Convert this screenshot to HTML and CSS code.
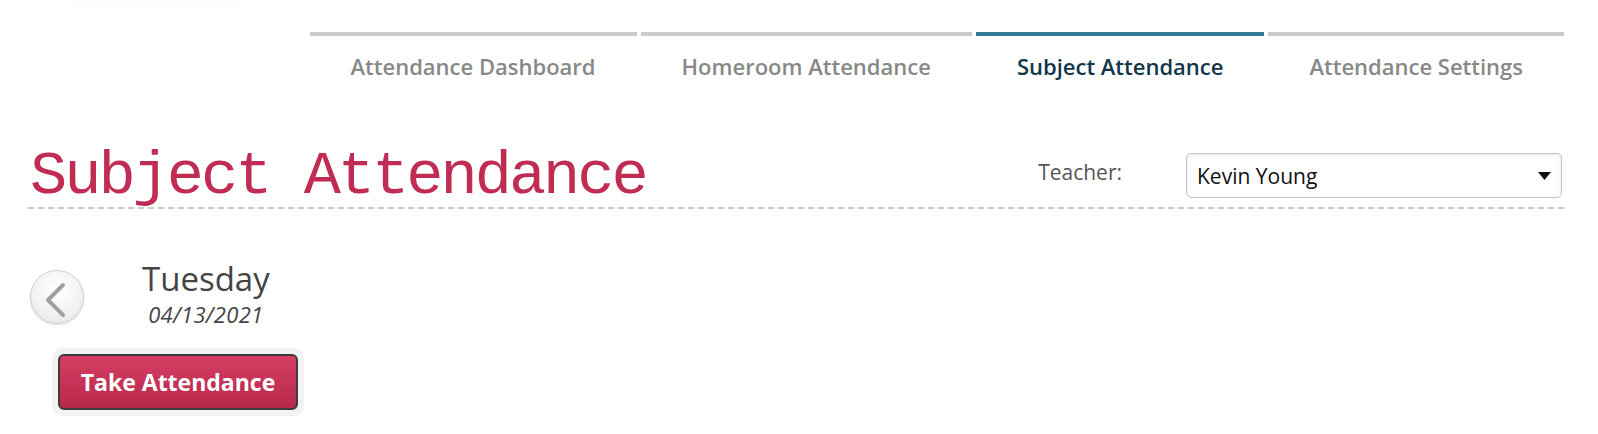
FILE: index.html
```html
<!DOCTYPE html>
<html lang="en">
<head>
  <meta charset="UTF-8">
  <meta name="viewport" content="width=device-width, initial-scale=1.0">
  <title>Subject Attendance</title>
  <link rel="stylesheet" href="styles.css">
</head>
<body>

<!-- Top navigation -->
<header class="topbar">
  <div class="logo-edge"></div>
  <nav class="tabs">
    <a class="tab" href="#">Attendance Dashboard</a>
    <a class="tab" href="#">Homeroom Attendance</a>
    <a class="tab active" href="#">Subject Attendance</a>
    <a class="tab" href="#">Attendance Settings</a>
  </nav>
</header>

<main class="page">
  <!-- Title + teacher select -->
  <div class="page-head">
    <h1 class="page-title">Subject Attendance</h1>
    <div class="teacher-picker">
      <span class="teacher-label">Teacher:</span>
      <div class="select">
        <span>Kevin Young</span>
        <svg class="select-arrow" viewBox="0 0 10 6"><path d="M0 0h10L5 6z"/></svg>
      </div>
    </div>
  </div>

  <!-- Day navigation -->
  <div class="day-nav">
    <button class="circle-btn" type="button" aria-label="Previous day">
      <svg viewBox="0 0 54 54"><polyline points="32,14 17,29 32,44"/></svg>
    </button>
    <div class="day-label">
      <div class="day-name">Tuesday</div>
      <div class="day-date">04/13/2021</div>
    </div>
  </div>

  <div class="take-wrap">
    <button class="take-btn" type="button">Take Attendance</button>
  </div>
</main>

</body>
</html>
```

FILE: styles.css
```css
body {
  margin: 0;
  font-family: "Open Sans", Arial, sans-serif;
  background: #fff;
  color: #444;
}

/* Top bar */
.topbar {
  display: flex;
  justify-content: space-between;
  align-items: flex-start;
  padding-right: 32px;
}

.logo-edge {
  width: 173px;
  height: 6px;
  margin-left: 70px;
  background: linear-gradient(#fefefe, #fbfbfb);
  border-radius: 0 0 6px 6px;
}

.tabs {
  display: flex;
  margin-top: 32px;
}

.tab {
  margin: 0 2px;
  padding: 16px 41px 0;
  border-top: 4px solid #cbcbcb;
  font-size: 22px;
  font-weight: 600;
  line-height: 28px;
  color: #888;
  text-decoration: none;
}

.tab.active {
  border-top-color: #34799a;
  color: #12374a;
}

/* Page */
.page {
  padding: 0 34px 0 28px;
}

.page-head {
  display: flex;
  justify-content: space-between;
  align-items: flex-end;
  margin-top: 72px;
  padding-bottom: 7px;
  background: repeating-linear-gradient(90deg, #cbcbcb 0 6px, transparent 6px 10px) left bottom / 100% 2px no-repeat;
}

.page-title {
  margin: 0 0 0 2px;
  font-family: "Liberation Mono", "Courier New", monospace;
  font-size: 62px;
  font-weight: normal;
  line-height: 50px;
  letter-spacing: -3px;
  color: #c02c53;
}

.teacher-picker {
  display: flex;
  align-items: center;
  margin-bottom: 4px;
}

.teacher-label {
  margin-right: 64px;
  padding-bottom: 8px;
  font-size: 21px;
  color: #555;
}

.select {
  display: flex;
  align-items: center;
  justify-content: space-between;
  box-sizing: border-box;
  width: 376px;
  height: 45px;
  margin-right: 2px;
  padding: 0 10px 0 10px;
  border: 1px solid #c4c4c4;
  border-radius: 5px;
  box-shadow: inset 0 1px 3px rgba(0, 0, 0, 0.1);
  font-size: 21px;
  color: #111;
}

.select-arrow {
  width: 13px;
  height: 8px;
  fill: #111;
}

/* Day navigation */
.day-nav {
  display: flex;
  align-items: flex-start;
  margin-top: 52px;
}

.circle-btn {
  width: 54px;
  height: 54px;
  margin: 9px 0 0 2px;
  padding: 0;
  border: 1px solid #cfcfcf;
  border-radius: 50%;
  background: radial-gradient(circle at 50% 35%, #ffffff 0%, #f3f3f3 55%, #e2e2e2 100%);
  box-shadow: 0 1px 2px rgba(0, 0, 0, 0.15);
  cursor: pointer;
}

.circle-btn svg {
  display: block;
  width: 54px;
  height: 54px;
}

.circle-btn polyline {
  fill: none;
  stroke: #a0a0a0;
  stroke-width: 4;
  stroke-linecap: round;
  stroke-linejoin: round;
}

.day-label {
  display: flex;
  flex-direction: column;
  align-items: center;
  margin-left: 58px;
}

.day-name {
  font-size: 33px;
  line-height: 36px;
  color: #444;
}

.day-date {
  margin-top: 5px;
  font-size: 22px;
  font-style: italic;
  line-height: 24px;
  letter-spacing: 0.3px;
  color: #444;
}

/* Take attendance */
.take-wrap {
  display: inline-block;
  margin: 22px 0 0 24px;
  padding: 6px;
  border-radius: 10px;
  background: #f2f2f2;
}

.take-btn {
  display: block;
  width: 240px;
  height: 56px;
  border: 2px solid #3d3d3d;
  border-radius: 6px;
  background: linear-gradient(#d63e64, #b7284b);
  font-family: "Open Sans", Arial, sans-serif;
  font-size: 23px;
  font-weight: 700;
  color: #fff;
  cursor: pointer;
}
```
